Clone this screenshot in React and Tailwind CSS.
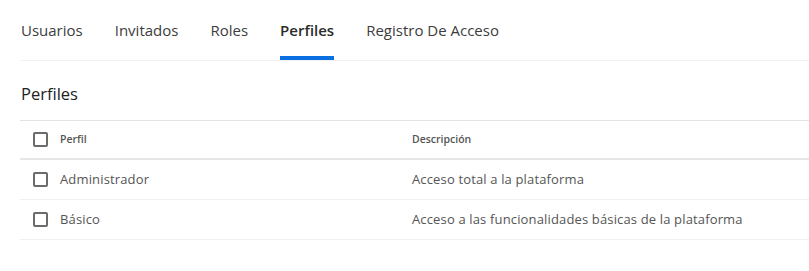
import React, { useState } from 'react';

const tabs = ['Usuarios', 'Invitados', 'Roles', 'Perfiles', 'Registro De Acceso'];

const profiles = [
  { id: 1, name: 'Administrador', description: 'Acceso total a la plataforma' },
  { id: 2, name: 'Básico', description: 'Acceso a las funcionalidades básicas de la plataforma' },
];

function Checkbox() {
  return <span className="block w-[15px] h-[15px] border-2 border-[#6b6b6b] rounded-[2px] bg-white shrink-0" />;
}

export default function App() {
  const [active, setActive] = useState('Perfiles');

  return (
    <div className="bg-white min-h-screen pl-5 text-[#333] font-['Open_Sans',sans-serif]">
      {/* Tabs */}
      <div className="flex gap-8 h-[61px] pl-px border-b border-[#f2f2f2]">
        {tabs.map(tab => (
          <button
            key={tab}
            onClick={() => setActive(tab)}
            className="flex flex-col justify-end h-full"
          >
            <span className={`text-[15px] leading-5 mb-[16px] ${active === tab ? 'font-semibold text-[#2b2b2b]' : 'font-medium text-[#3d3d3d]'}`}>
              {tab}
            </span>
            <span className={`block h-1 w-full ${active === tab ? 'bg-[#0a6fe0]' : 'bg-transparent'}`} />
          </button>
        ))}
      </div>

      {/* Title */}
      <h2 className="mt-[21px] pl-px text-[16.5px] leading-6 text-[#222]">Perfiles</h2>

      {/* Table */}
      <div className="mt-[14px] border-t border-[#e3e3e3]">
        <div className="flex items-center h-[39px] border-b-2 border-[#e6e6e6]">
          <div className="w-[392px] flex items-center gap-[12px] pl-[13px]">
            <Checkbox />
            <span className="text-[10.5px] font-semibold text-[#555]">Perfil</span>
          </div>
          <span className="text-[10.5px] font-semibold text-[#555]">Descripción</span>
        </div>
        {profiles.map(p => (
          <div key={p.id} className="flex items-center h-10 border-b border-[#f0f0f0]">
            <div className="w-[392px] flex items-center gap-[12px] pl-[13px]">
              <Checkbox />
              <span className="text-[13px] tracking-[0.15px] text-[#555] pt-px">{p.name}</span>
            </div>
            <span className="text-[13px] tracking-[0.15px] text-[#555] pt-px">{p.description}</span>
          </div>
        ))}
      </div>
    </div>
  );
}
